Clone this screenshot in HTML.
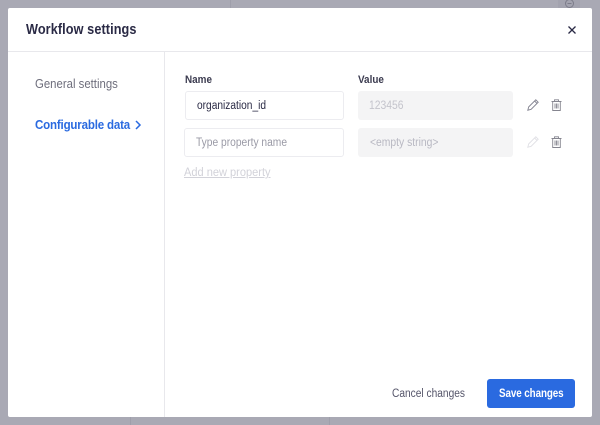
<!DOCTYPE html>
<html><head><meta charset="utf-8">
<style>
html,body{margin:0;padding:0}
body{width:600px;height:425px;background:#a9a9b4;position:relative;overflow:hidden;font-family:"Liberation Sans",sans-serif}
.a{position:absolute;white-space:nowrap;line-height:16px;transform-origin:0 50%}
.b{position:absolute;box-sizing:border-box;border-radius:3px}
svg{position:absolute;overflow:visible}
</style></head><body>
<div class="b" style="left:230px;top:0;width:1px;height:8px;background:#9f9fab;border-radius:0"></div>
<div class="b" style="left:130px;top:417px;width:1px;height:8px;background:#9f9fab;border-radius:0"></div>
<div class="b" style="left:329px;top:417px;width:1px;height:8px;background:#9f9fab;border-radius:0"></div>
<div class="b" style="left:558px;top:0;width:22px;height:8px;background:#a3a3af;border-radius:0"></div>
<svg style="left:564px;top:0" width="11" height="8" fill="none" stroke="#7c7c8a"><circle cx="5.5" cy="3.5" r="4"/><path d="M3.5 3.5h4"/></svg>

<div class="b" style="left:8px;top:8px;width:584px;height:409px;background:#fff;border-radius:2px"></div>
<div class="b" style="left:8px;top:51px;width:584px;height:1px;background:#e8e8ec;border-radius:0"></div>
<div class="b" style="left:164px;top:52px;width:1px;height:365px;background:#e8e8ec;border-radius:0"></div>

<div class="a" style="left:26px;top:22px;font-size:14.5px;font-weight:bold;color:#2a2a45;letter-spacing:.1px;transform:scaleX(.875)">Workflow settings</div>
<svg style="left:568px;top:26px" width="8" height="8" fill="none" stroke="#2a2a45" stroke-width="1.300"><path d="M.5 .5l7 7M7.500 .5l-7 7"/></svg>

<div class="a" style="left:35px;top:76px;font-size:13px;color:#6e6e7c;transform:scaleX(.875)">General settings</div>
<div class="a" style="left:35px;top:117px;font-size:13px;font-weight:bold;color:#2a6ae0;letter-spacing:-.2px;transform:scaleX(.887)">Configurable data</div>
<svg style="left:135px;top:120px" width="6" height="10" fill="none" stroke="#2a6ae0" stroke-width="1.500"><path d="M1 1l4 4-4 4"/></svg>

<div class="a" style="left:185px;top:72px;font-size:11px;font-weight:bold;color:#3c3c50;transform:scaleX(.9)">Name</div>
<div class="a" style="left:358px;top:72px;font-size:11px;font-weight:bold;color:#3c3c50;transform:scaleX(.9)">Value</div>

<div class="b" style="left:185px;top:91px;width:159px;height:29px;background:#fff;border:1px solid #ececf0"></div>
<div class="a" style="left:197px;top:98px;font-size:11.5px;color:#2a2a45;transform:scaleX(.885)">organization_id</div>
<div class="b" style="left:184px;top:128px;width:160px;height:29px;background:#fff;border:1px solid #ececf0"></div>
<div class="a" style="left:196px;top:135px;font-size:11.5px;color:#9a9aa6;transform:scaleX(.89)">Type property name</div>
<div class="a" style="left:184px;top:165px;font-size:11.5px;color:#d2d2d9;text-decoration:underline;transform:scaleX(.96)">Add new property</div>

<div class="b" style="left:358px;top:91px;width:155px;height:29px;background:#f4f4f5"></div>
<div class="a" style="left:369px;top:98px;font-size:11.5px;color:#c4c4cc;transform:scaleX(.9)">123456</div>
<div class="b" style="left:358px;top:128px;width:155px;height:29px;background:#f4f4f5"></div>
<div class="a" style="left:370px;top:135px;font-size:11.5px;color:#b8b8c2;transform:scaleX(.9)">&lt;empty string&gt;</div>

<svg style="left:527px;top:99px" width="12" height="12" fill="none" stroke="#80808e" stroke-width=".9"><path d="M.8 11.200l.9-3.300L8.800.8 11.200 3.200 4.100 10.300zM7.600 2l2.400 2.400"/></svg>
<svg style="left:527px;top:136px" width="12" height="12" fill="none" stroke="#e0e0e5" stroke-width=".9"><path d="M.8 11.200l.9-3.300L8.800.8 11.200 3.200 4.100 10.300zM7.600 2l2.400 2.400"/></svg>
<svg style="left:551px;top:99px" width="11" height="12" fill="none" stroke="#85858f" stroke-width=".9"><path d="M.5 2.500h10M3.500 2.500V.8h4v1.700M1.700 2.500v9h7.600v-9M4 4.500v5M5.500 4.500v5M7 4.500v5"/></svg>
<svg style="left:551px;top:136px" width="11" height="12" fill="none" stroke="#85858f" stroke-width=".9"><path d="M.5 2.500h10M3.500 2.500V.8h4v1.700M1.700 2.500v9h7.600v-9M4 4.500v5M5.500 4.500v5M7 4.500v5"/></svg>

<div class="a" style="left:392px;top:386px;font-size:11.5px;color:#55556a;transform:scaleX(.885)">Cancel changes</div>
<div class="b" style="left:487px;top:379px;width:88px;height:29px;background:#2a6ae0"></div>
<div class="a" style="left:499px;top:386px;font-size:11.5px;font-weight:bold;color:#fff;letter-spacing:-.1px;transform:scaleX(.855)">Save changes</div>
</body></html>
